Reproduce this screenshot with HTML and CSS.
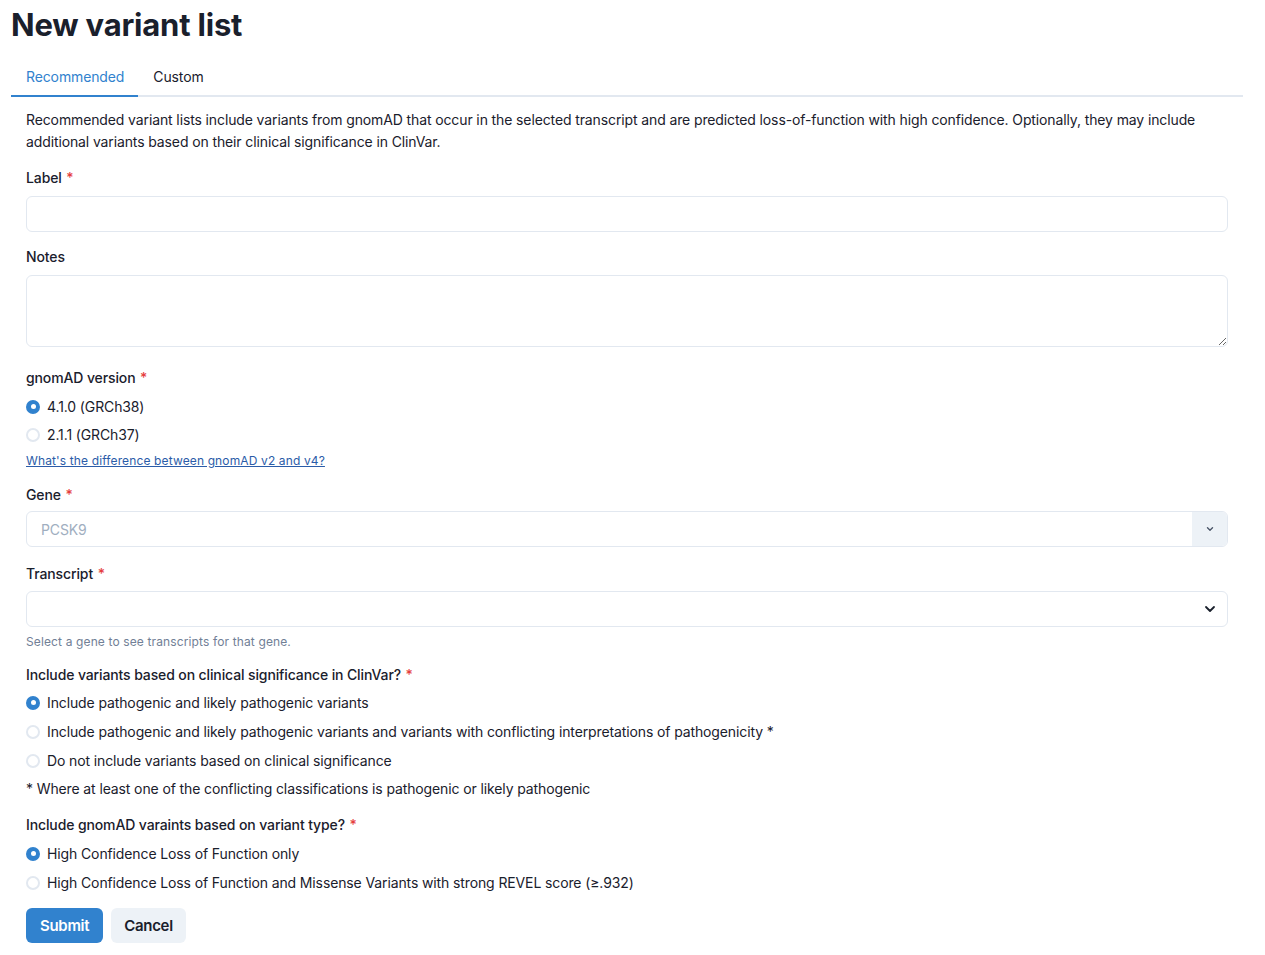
FILE: index.html
```html
<!DOCTYPE html>
<html lang="en">
<head>
<meta charset="utf-8">
<title>New variant list</title>
<link rel="stylesheet" href="styles.css">
</head>
<body>
<div class="page">
  <h1 class="title">New variant list</h1>
  <div class="tabs">
    <div class="tab tab-active">Recommended</div>
    <div class="tab">Custom</div>
  </div>
  <form class="panel">
    <p class="intro">Recommended variant lists include variants from gnomAD that occur in the selected transcript and are predicted loss-of-function with high confidence. Optionally, they may include additional variants based on their clinical significance in ClinVar.</p>

    <div class="control">
      <label class="label">Label <span class="req">*</span></label>
      <input class="input" type="text">
    </div>

    <div class="control">
      <label class="label">Notes</label>
      <textarea class="textarea"></textarea>
    </div>

    <div class="control group-gnomad">
      <div class="label">gnomAD version <span class="req">*</span></div>
      <div class="radios radios-tight">
        <div class="radio-row"><span class="radio checked"></span><span>4.1.0 (GRCh38)</span></div>
        <div class="radio-row"><span class="radio"></span><span>2.1.1 (GRCh37)</span></div>
      </div>
      <a class="link" href="#">What's the difference between gnomAD v2 and v4?</a>
    </div>

    <div class="control">
      <label class="label label-gene">Gene <span class="req">*</span></label>
      <div class="combo">
        <span class="combo-value">PCSK9</span>
        <span class="combo-addon">
          <svg width="10" height="10" viewBox="0 0 10 10"><path d="M2.5 3.8 L5 6.2 L7.5 3.8" fill="none" stroke="#4a5568" stroke-width="1.4" stroke-linecap="round" stroke-linejoin="round"/></svg>
        </span>
      </div>
    </div>

    <div class="control group-transcript">
      <label class="label label-transcript">Transcript <span class="req">*</span></label>
      <div class="select">
        <svg class="select-icon" width="12" height="12" viewBox="0 0 12 12"><path d="M2 4 L6 8 L10 4" fill="none" stroke="#1a202c" stroke-width="1.8" stroke-linecap="round" stroke-linejoin="round"/></svg>
      </div>
      <div class="helper">Select a gene to see transcripts for that gene.</div>
    </div>

    <div class="control group-clinvar">
      <div class="label label-clinvar">Include variants based on clinical significance in ClinVar? <span class="req">*</span></div>
      <div class="radios">
        <div class="radio-row"><span class="radio checked"></span><span>Include pathogenic and likely pathogenic variants</span></div>
        <div class="radio-row"><span class="radio"></span><span>Include pathogenic and likely pathogenic variants and variants with conflicting interpretations of pathogenicity *</span></div>
        <div class="radio-row"><span class="radio"></span><span>Do not include variants based on clinical significance</span></div>
      </div>
      <p class="footnote">* Where at least one of the conflicting classifications is pathogenic or likely pathogenic</p>
    </div>

    <div class="control group-type">
      <div class="label">Include gnomAD varaints based on variant type? <span class="req">*</span></div>
      <div class="radios">
        <div class="radio-row"><span class="radio checked"></span><span>High Confidence Loss of Function only</span></div>
        <div class="radio-row"><span class="radio"></span><span>High Confidence Loss of Function and Missense Variants with strong REVEL score (≥.932)</span></div>
      </div>
    </div>

    <div class="buttons">
      <button class="btn btn-primary" type="button">Submit</button>
      <button class="btn btn-secondary" type="button">Cancel</button>
    </div>
  </form>
</div>
</body>
</html>
```

FILE: styles.css
```css
* { box-sizing: border-box; }

html, body {
  margin: 0;
  padding: 0;
  background: #ffffff;
}

body {
  font-family: Inter, "Noto Sans", "Liberation Sans", sans-serif;
  color: #1a202c;
  font-size: 14px;
  line-height: 21px;
  letter-spacing: -0.12px;
}

.page {
  padding: 0 22px 0 11px;
}

.title {
  margin: 6px 0 0 0;
  font-size: 31px;
  line-height: 38px;
  font-weight: 700;
  color: #1a202c;
  letter-spacing: -0.2px;
}

.tabs {
  margin-top: 14px;
  display: flex;
  border-bottom: 2px solid #e2e8f0;
}

.tab {
  padding: 8px 14px 8px 15px;
  font-size: 14px;
  line-height: 21px;
  color: #1a202c;
  border-bottom: 2px solid transparent;
  margin-bottom: -2px;
}

.tab-active {
  color: #3182ce;
  border-bottom-color: #3182ce;
}

.panel {
  padding: 12px 15px 0 15px;
  display: flex;
  flex-direction: column;
}

.intro {
  margin: 0;
  line-height: 22px;
}

.control {
  margin-top: 14px;
  display: flex;
  flex-direction: column;
}

.group-gnomad {
  margin-top: 20px;
}

.group-transcript {
  margin-top: 16px;
}

.group-clinvar {
  margin-top: 13px;
}

.group-type {
  margin-top: 15px;
}

.label {
  font-weight: 500;
  margin-bottom: 8px;
}

.label-gene {
  margin-bottom: 6px;
}

.label-transcript {
  margin-bottom: 7px;
}

.label-clinvar {
  margin-bottom: 7px;
}

.req {
  color: #e53e3e;
  margin-left: 1px;
}

.input {
  height: 36px;
  border: 1px solid #e2e8f0;
  border-radius: 6px;
  padding: 0 14px;
  font: inherit;
  outline: none;
  background: #fff;
}

.textarea {
  height: 72px;
  border: 1px solid #e2e8f0;
  border-radius: 6px;
  padding: 8px 14px;
  font: inherit;
  resize: vertical;
  outline: none;
  display: block;
}

.combo {
  height: 36px;
  border: 1px solid #e2e8f0;
  border-radius: 6px;
  display: flex;
  align-items: stretch;
  overflow: hidden;
}

.combo-value {
  flex: 1;
  display: flex;
  align-items: center;
  padding-left: 14px;
  color: #a0aec0;
}

.combo-addon {
  width: 35px;
  background: #edf2f7;
  display: flex;
  align-items: center;
  justify-content: center;
}

.select {
  height: 36px;
  border: 1px solid #e2e8f0;
  border-radius: 6px;
  display: flex;
  align-items: center;
  justify-content: flex-end;
  padding-right: 11px;
}

.helper {
  margin-top: 6px;
  font-size: 12px;
  line-height: 18px;
  color: #718096;
  letter-spacing: 0.13px;
}

.radios {
  display: flex;
  flex-direction: column;
  gap: 8px;
}

.radios-tight {
  gap: 7px;
}

.radio-row {
  display: flex;
  align-items: center;
  gap: 7px;
}

.radio {
  width: 14px;
  height: 14px;
  border-radius: 50%;
  border: 2px solid #e2e8f0;
  flex: none;
  display: flex;
  align-items: center;
  justify-content: center;
}

.radio.checked {
  background: #3182ce;
  border-color: #3182ce;
}

.radio.checked::before {
  content: "";
  width: 5px;
  height: 5px;
  border-radius: 50%;
  background: #fff;
}

.link {
  margin-top: 7px;
  font-size: 12px;
  line-height: 18px;
  color: #2b5ca8;
  text-decoration: underline;
  align-self: flex-start;
  letter-spacing: 0.13px;
}

.footnote {
  margin: 7px 0 0 0;
}

.buttons {
  margin-top: 15px;
  display: flex;
  gap: 8px;
}

.btn {
  height: 35px;
  border: none;
  border-radius: 6px;
  padding: 0 14px;
  font-family: inherit;
  font-size: 15px;
  font-weight: 600;
  letter-spacing: -0.3px;
  cursor: pointer;
}

.btn-secondary {
  padding: 0 13px;
}

.btn-primary {
  background: #3182ce;
  color: #fff;
}

.btn-secondary {
  background: #edf2f7;
  color: #1a202c;
}
```
